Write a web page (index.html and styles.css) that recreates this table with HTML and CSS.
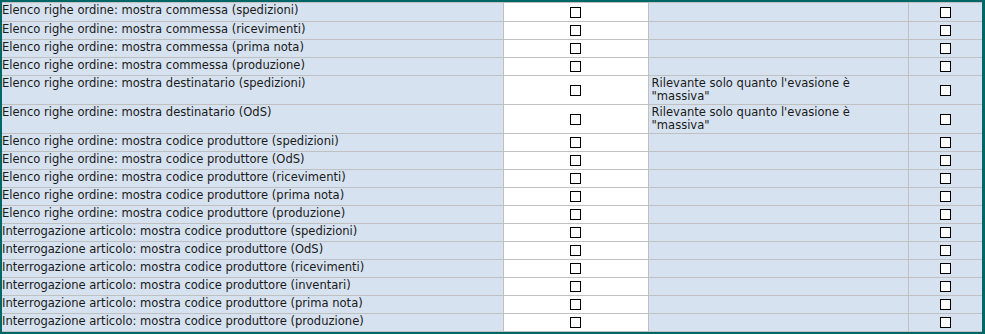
FILE: index.html
```html
<!DOCTYPE html>
<html lang="it">
<head>
<meta charset="utf-8">
<title>Opzioni</title>
<link rel="stylesheet" href="styles.css">
</head>
<body>
<div class="frame">
<table class="grid">
<colgroup><col class="c1"><col class="c2"><col class="c3"><col class="c4"></colgroup>
<tbody>
<tr class="first"><td class="lbl">Elenco righe ordine: mostra commessa (spedizioni)</td><td class="chk"><span class="box"></span></td><td class="note"></td><td class="chk2"><span class="box"></span></td></tr>
<tr><td class="lbl">Elenco righe ordine: mostra commessa (ricevimenti)</td><td class="chk"><span class="box"></span></td><td class="note"></td><td class="chk2"><span class="box"></span></td></tr>
<tr><td class="lbl">Elenco righe ordine: mostra commessa (prima nota)</td><td class="chk"><span class="box"></span></td><td class="note"></td><td class="chk2"><span class="box"></span></td></tr>
<tr><td class="lbl">Elenco righe ordine: mostra commessa (produzione)</td><td class="chk"><span class="box"></span></td><td class="note"></td><td class="chk2"><span class="box"></span></td></tr>
<tr class="tall"><td class="lbl">Elenco righe ordine: mostra destinatario (spedizioni)</td><td class="chk"><span class="box"></span></td><td class="note">Rilevante solo quanto l'evasione è "massiva"</td><td class="chk2"><span class="box"></span></td></tr>
<tr class="tall"><td class="lbl">Elenco righe ordine: mostra destinatario (OdS)</td><td class="chk"><span class="box"></span></td><td class="note">Rilevante solo quanto l'evasione è "massiva"</td><td class="chk2"><span class="box"></span></td></tr>
<tr><td class="lbl">Elenco righe ordine: mostra codice produttore (spedizioni)</td><td class="chk"><span class="box"></span></td><td class="note"></td><td class="chk2"><span class="box"></span></td></tr>
<tr><td class="lbl">Elenco righe ordine: mostra codice produttore (OdS)</td><td class="chk"><span class="box"></span></td><td class="note"></td><td class="chk2"><span class="box"></span></td></tr>
<tr><td class="lbl">Elenco righe ordine: mostra codice produttore (ricevimenti)</td><td class="chk"><span class="box"></span></td><td class="note"></td><td class="chk2"><span class="box"></span></td></tr>
<tr><td class="lbl">Elenco righe ordine: mostra codice produttore (prima nota)</td><td class="chk"><span class="box"></span></td><td class="note"></td><td class="chk2"><span class="box"></span></td></tr>
<tr><td class="lbl">Elenco righe ordine: mostra codice produttore (produzione)</td><td class="chk"><span class="box"></span></td><td class="note"></td><td class="chk2"><span class="box"></span></td></tr>
<tr><td class="lbl">Interrogazione articolo: mostra codice produttore (spedizioni)</td><td class="chk"><span class="box"></span></td><td class="note"></td><td class="chk2"><span class="box"></span></td></tr>
<tr><td class="lbl">Interrogazione articolo: mostra codice produttore (OdS)</td><td class="chk"><span class="box"></span></td><td class="note"></td><td class="chk2"><span class="box"></span></td></tr>
<tr><td class="lbl">Interrogazione articolo: mostra codice produttore (ricevimenti)</td><td class="chk"><span class="box"></span></td><td class="note"></td><td class="chk2"><span class="box"></span></td></tr>
<tr><td class="lbl">Interrogazione articolo: mostra codice produttore (inventari)</td><td class="chk"><span class="box"></span></td><td class="note"></td><td class="chk2"><span class="box"></span></td></tr>
<tr><td class="lbl">Interrogazione articolo: mostra codice produttore (prima nota)</td><td class="chk"><span class="box"></span></td><td class="note"></td><td class="chk2"><span class="box"></span></td></tr>
<tr class="last"><td class="lbl">Interrogazione articolo: mostra codice produttore (produzione)</td><td class="chk"><span class="box"></span></td><td class="note"></td><td class="chk2"><span class="box"></span></td></tr>
</tbody>
</table>
</div>
</body>
</html>
```

FILE: styles.css
```css
html, body {
  margin: 0;
  padding: 0;
  background: #ffffff;
}
.frame {
  width: 980px;
  border-top: 2px solid #006666;
  border-left: 2px solid #006666;
  border-right: 3px solid #006666;
  border-bottom: 2px solid #006666;
}
.grid {
  width: 980px;
  table-layout: fixed;
  border-collapse: collapse;
  border-top: 1px solid #c0c0c0;
  font-family: "DejaVu Sans", Verdana, sans-serif;
  font-size: 11.55px;
  line-height: 13px;
  color: #1a1a1a;
}
.c1 { width: 501px; }
.c2 { width: 145px; }
.c3 { width: 260px; }
.c4 { width: 74px; }
.grid td {
  padding: 0;
  height: 17px;
  vertical-align: top;
  background: #d6e2f0;
  border-bottom: 1px solid #c0c0c0;
  border-right: 1px solid #c0c0c0;
  box-sizing: content-box;
}
.grid td:last-child {
  border-right: none;
}
.grid tr.first td { height: 18px; }
.grid tr.tall td { height: 28px; }
.grid td.lbl {
  padding-top: 1px;
  height: 16px;
  white-space: nowrap;
}
.grid tr.first td.lbl { height: 17px; }
.grid tr.tall td.lbl { height: 27px; }
.grid td.note {
  padding: 1px 2px 0 3px;
  height: 16px;
}
.grid tr.first td.note { height: 17px; }
.grid tr.tall td.note { height: 27px; }
.grid td.chk {
  background: #ffffff;
  text-align: center;
  vertical-align: middle;
}
.grid td.chk2 {
  text-align: center;
  vertical-align: middle;
}
.box {
  display: inline-block;
  width: 11px;
  height: 11px;
  box-sizing: border-box;
  border: 1.5px solid #000;
  background: #fff;
  vertical-align: middle;
}
```
